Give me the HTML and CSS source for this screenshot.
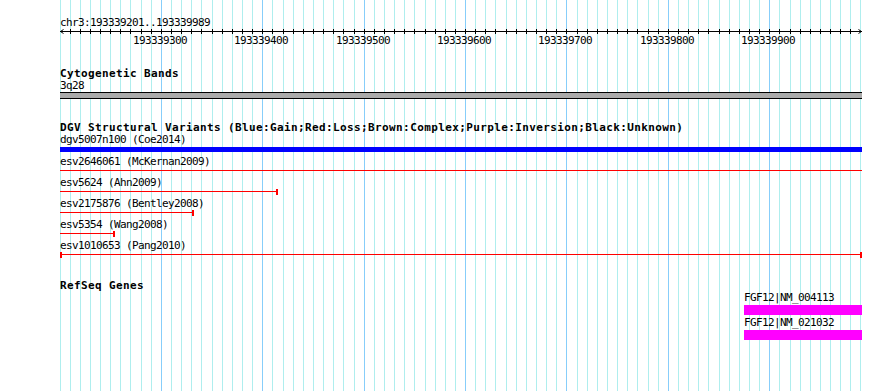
FILE: index.html
```html
<!DOCTYPE html>
<html>
<head>
<meta charset="utf-8">
<title>Genome browser</title>
<link rel="stylesheet" href="styles.css">
</head>
<body>
<div class="panel">
  <svg class="grid" width="890" height="391" viewBox="0 0 890 391" aria-hidden="true">
    <path class="grid-minor" d="M60.5 0V391M70.5 0V391M80.5 0V391M90.5 0V391M100.5 0V391M110.5 0V391M120.5 0V391M130.5 0V391M141.5 0V391M151.5 0V391M171.5 0V391M181.5 0V391M191.5 0V391M201.5 0V391M212.5 0V391M222.5 0V391M232.5 0V391M242.5 0V391M252.5 0V391M272.5 0V391M283.5 0V391M293.5 0V391M303.5 0V391M313.5 0V391M323.5 0V391M333.5 0V391M343.5 0V391M354.5 0V391M374.5 0V391M384.5 0V391M394.5 0V391M404.5 0V391M414.5 0V391M425.5 0V391M435.5 0V391M445.5 0V391M455.5 0V391M475.5 0V391M485.5 0V391M495.5 0V391M506.5 0V391M516.5 0V391M526.5 0V391M536.5 0V391M546.5 0V391M556.5 0V391M577.5 0V391M587.5 0V391M597.5 0V391M607.5 0V391M617.5 0V391M627.5 0V391M637.5 0V391M648.5 0V391M658.5 0V391M678.5 0V391M688.5 0V391M698.5 0V391M708.5 0V391M719.5 0V391M729.5 0V391M739.5 0V391M749.5 0V391M759.5 0V391M779.5 0V391M790.5 0V391M800.5 0V391M810.5 0V391M820.5 0V391M830.5 0V391M840.5 0V391M850.5 0V391M860.5 0V391"/>
    <path class="grid-major" d="M161.5 0V391M262.5 0V391M364.5 0V391M465.5 0V391M566.5 0V391M668.5 0V391M769.5 0V391"/>
  </svg>

  <div class="tracks">
    <section class="ruler">
      <div class="chrom">chr3:193339201..193339989</div>
      <svg class="axis" width="802" height="20" viewBox="0 0 802 20">
        <path class="axis-line" d="M0 2.5H802"/>
        <path class="axis-line" d="M10.5 0V5M20.5 0V5M30.5 0V5M40.5 0V5M50.5 0V5M60.5 0V5M70.5 0V5M81.5 0V5M91.5 0V5M101.5 0V5M111.5 0V5M121.5 0V5M131.5 0V5M141.5 0V5M152.5 0V5M162.5 0V5M172.5 0V5M182.5 0V5M192.5 0V5M202.5 0V5M212.5 0V5M223.5 0V5M233.5 0V5M243.5 0V5M253.5 0V5M263.5 0V5M273.5 0V5M283.5 0V5M294.5 0V5M304.5 0V5M314.5 0V5M324.5 0V5M334.5 0V5M344.5 0V5M354.5 0V5M365.5 0V5M375.5 0V5M385.5 0V5M395.5 0V5M405.5 0V5M415.5 0V5M425.5 0V5M435.5 0V5M446.5 0V5M456.5 0V5M466.5 0V5M476.5 0V5M486.5 0V5M496.5 0V5M506.5 0V5M517.5 0V5M527.5 0V5M537.5 0V5M547.5 0V5M557.5 0V5M567.5 0V5M577.5 0V5M588.5 0V5M598.5 0V5M608.5 0V5M618.5 0V5M628.5 0V5M638.5 0V5M648.5 0V5M659.5 0V5M669.5 0V5M679.5 0V5M689.5 0V5M699.5 0V5M709.5 0V5M719.5 0V5M730.5 0V5M740.5 0V5M750.5 0V5M760.5 0V5M770.5 0V5M780.5 0V5M790.5 0V5"/>
        <path class="axis-arrow" d="M3.5 0.5L0.5 2.5L3.5 4.5M798.5 0.5L801.5 2.5L798.5 4.5"/>
        <text class="axis-label" x="73" y="15">193339300</text>
        <text class="axis-label" x="174" y="15">193339400</text>
        <text class="axis-label" x="276" y="15">193339500</text>
        <text class="axis-label" x="377" y="15">193339600</text>
        <text class="axis-label" x="478" y="15">193339700</text>
        <text class="axis-label" x="580" y="15">193339800</text>
        <text class="axis-label" x="681" y="15">193339900</text>
      </svg>
    </section>

    <section class="track cyto">
      <h2 class="track-title">Cytogenetic Bands</h2>
      <div class="feature-label">3q28</div>
      <div class="band"></div>
    </section>

    <section class="track dgv">
      <h2 class="track-title">DGV Structural Variants (Blue:Gain;Red:Loss;Brown:Complex;Purple:Inversion;Black:Unknown)</h2>
      <div class="feature gain">
        <div class="feature-label">dgv5007n100 (Coe2014)</div>
        <div class="gain-bar"></div>
      </div>
      <div class="feature loss">
        <div class="feature-label">esv2646061 (McKernan2009)</div>
        <div class="seg" style="width:802px"><span class="seg-line"></span></div>
      </div>
      <div class="feature loss">
        <div class="feature-label">esv5624 (Ahn2009)</div>
        <div class="seg" style="width:218px"><span class="seg-line"></span><span class="cap"></span></div>
      </div>
      <div class="feature loss">
        <div class="feature-label">esv2175876 (Bentley2008)</div>
        <div class="seg" style="width:134px"><span class="seg-line"></span><span class="cap"></span></div>
      </div>
      <div class="feature loss">
        <div class="feature-label">esv5354 (Wang2008)</div>
        <div class="seg" style="width:55px"><span class="seg-line"></span><span class="cap"></span></div>
      </div>
      <div class="feature loss">
        <div class="feature-label">esv1010653 (Pang2010)</div>
        <div class="seg" style="width:802px"><span class="cap"></span><span class="seg-line"></span><span class="cap"></span></div>
      </div>
    </section>

    <section class="track genes">
      <h2 class="track-title">RefSeq Genes</h2>
      <div class="gene">
        <div class="feature-label">FGF12|NM_004113</div>
        <div class="gene-bar"></div>
      </div>
      <div class="gene">
        <div class="feature-label">FGF12|NM_021032</div>
        <div class="gene-bar"></div>
      </div>
    </section>
  </div>
</div>
</body>
</html>
```

FILE: styles.css
```css
html, body {
  margin: 0;
  padding: 0;
  background: #ffffff;
}

.panel {
  position: relative;
  width: 890px;
  height: 391px;
  overflow: hidden;
  font-family: "DejaVu Sans Mono", "Liberation Mono", monospace;
  font-size: 11px;
  letter-spacing: -0.62px;
  color: #000000;
}

.grid {
  position: absolute;
  left: 0;
  top: 0;
  display: block;
}

.grid-minor {
  stroke: #afeeee;
  stroke-width: 1;
  fill: none;
}

.grid-major {
  stroke: #87cefa;
  stroke-width: 1;
  fill: none;
}

.tracks {
  position: relative;
  width: 802px;
  padding: 16px 0 0 60px;
  display: flex;
  flex-direction: column;
}

.chrom {
  height: 13px;
  line-height: 13px;
  white-space: nowrap;
}

.axis {
  display: block;
  overflow: visible;
}

.axis-line {
  stroke: #000000;
  stroke-width: 1;
  fill: none;
  shape-rendering: crispEdges;
}

.axis-arrow {
  stroke: #000000;
  stroke-width: 1;
  fill: none;
}

.axis-label {
  font-family: "DejaVu Sans Mono", "Liberation Mono", monospace;
  font-size: 11px;
  letter-spacing: -0.62px;
  fill: #000000;
}

.track {
  display: flex;
  flex-direction: column;
}

.track-title {
  margin: 0;
  height: 13px;
  line-height: 13px;
  font-size: 11px;
  font-weight: bold;
  letter-spacing: 0.38px;
  white-space: nowrap;
}

.feature-label {
  height: 12px;
  line-height: 12px;
  white-space: nowrap;
}

.cyto {
  margin-top: 18px;
}

.band {
  height: 5px;
  border-top: 1px solid #000000;
  border-bottom: 1px solid #000000;
  background: #aaaaaa;
}

.dgv {
  margin-top: 22px;
}

.feature {
  display: flex;
  flex-direction: column;
}

.gain {
  height: 22px;
}

.gain-bar {
  margin-top: 1px;
  height: 5px;
  background: #0000ff;
}

.loss {
  height: 21px;
}

.seg {
  display: flex;
  align-items: flex-start;
  height: 6px;
}

.seg-line {
  flex: 1;
  height: 1px;
  margin-top: 2px;
  background: #ff0000;
}

.cap {
  width: 2px;
  height: 6px;
  background: #ff0000;
}

.genes {
  margin-top: 18px;
}

.gene {
  display: flex;
  flex-direction: column;
  height: 25px;
  padding-left: 684px;
}

.gene-bar {
  margin-top: 1px;
  width: 118px;
  height: 10px;
  background: #ff00ff;
}
```
